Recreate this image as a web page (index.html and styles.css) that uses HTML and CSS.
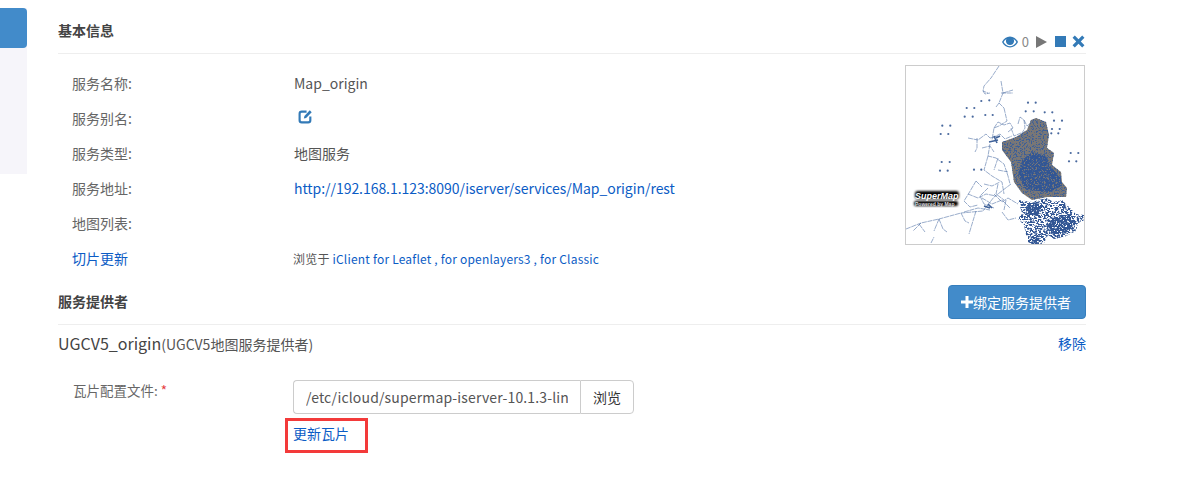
FILE: index.html
```html
<!DOCTYPE html>
<html lang="zh">
<head>
<meta charset="utf-8">
<title>基本信息</title>
<link rel="stylesheet" href="styles.css">
</head>
<body>
<div class="page">
  <aside class="side"><div class="side-active"></div></aside>
  <main class="main">
    <header class="head head-basic">
      <h2 class="title">基本信息</h2>
      <div class="tools">
        <svg class="ic-eye" viewBox="0 0 16 12"><path fill="#337ab7" fill-rule="evenodd" d="M8 .5C4.600.5 1.600 2.600 0 6c1.600 3.400 4.600 5.500 8 5.500s6.400-2.100 8-5.500C14.400 2.600 11.400.5 8 .5zM8 10.200C5.400 10.200 3 8.600 1.600 6 2.300 4.700 3.300 3.600 4.500 2.900 4.100 3.500 3.900 4.200 3.900 5c0 2.300 1.800 4.100 4.100 4.100S12.100 7.300 12.100 5c0-.8-.2-1.500-.6-2.100 1.200.7 2.200 1.800 2.900 3.100C13 8.600 10.600 10.200 8 10.200z"/><circle cx="7" cy="4" r="1.800" fill="#337ab7"/></svg>
        <span class="count">0</span>
        <svg class="ic-play" viewBox="0 0 11 12"><path fill="#777" d="M0 0l11 6-11 6z"/></svg>
        <span class="ic-stop"></span>
        <svg class="ic-x" viewBox="0 0 12 12"><path fill="#337ab7" d="M2.600.5L6 3.900 9.400.5l2.100 2.100L8.100 6l3.400 3.400-2.100 2.100L6 8.100l-3.400 3.400-2.100-2.100L3.900 6 .5 2.600z"/></svg>
      </div>
    </header>

    <section class="basic">
      <div class="rows">
        <div class="row"><span class="label">服务名称:</span><span class="value">Map_origin</span></div>
        <div class="row"><span class="label">服务别名:</span>
          <span class="value"><svg class="ic-edit" viewBox="0 0 14 14"><path fill="none" stroke="#337ab7" stroke-width="2" d="M8 2.500H3.500q-2 0-2 2v6q0 2 2 2h6q2 0 2-2V7"/><path fill="#337ab7" d="M6 6.500L11 1.200l1.800 1.800-5.200 5.300-2.200.5z"/></svg></span></div>
        <div class="row"><span class="label">服务类型:</span><span class="value">地图服务</span></div>
        <div class="row"><span class="label">服务地址:</span><a class="value link url" href="#">http://192.168.1.123:8090/iserver/services/Map_origin/rest</a></div>
        <div class="row"><span class="label">地图列表:</span><span class="value"></span></div>
        <div class="row"><a class="label link" href="#">切片更新</a>
          <span class="value small">浏览于 <a class="link" href="#">iClient for Leaflet , for openlayers3 , for Classic</a></span></div>
      </div>
      <div class="thumb">
        <svg viewBox="0 0 178 178" width="178" height="178">
          <defs>
            <filter id="sparse" x="0" y="0" width="100%" height="100%" color-interpolation-filters="sRGB">
              <feTurbulence type="fractalNoise" baseFrequency="0.7" numOctaves="2" seed="7"/>
              <feColorMatrix type="matrix" values="0 0 0 0 0.23  0 0 0 0 0.37  0 0 0 0 0.60  0 0 0 9 -4.700"/>
            </filter>
            <filter id="dense" x="0" y="0" width="100%" height="100%" color-interpolation-filters="sRGB">
              <feTurbulence type="fractalNoise" baseFrequency="0.6" numOctaves="2" seed="3"/>
              <feColorMatrix type="matrix" values="0 0 0 0 0.20  0 0 0 0 0.34  0 0 0 0 0.58  0 0 0 9 -3.300"/>
            </filter>
            <filter id="thin" x="0" y="0" width="100%" height="100%" color-interpolation-filters="sRGB">
              <feTurbulence type="fractalNoise" baseFrequency="0.45 0.75" numOctaves="3" seed="11"/>
              <feColorMatrix type="matrix" values="0 0 0 0 0.20  0 0 0 0 0.34  0 0 0 0 0.58  0 0 0 10 -4.500"/>
            </filter>
            <filter id="soft"><feGaussianBlur stdDeviation="0.9"/></filter>
            <filter id="tiny" x="-5%" y="-5%" width="110%" height="110%"><feGaussianBlur stdDeviation="0.3"/></filter>
            <clipPath id="land"><path d="M130 52l10 4 3 13-2 13 7 5-2 12 9 7 1 10 5 6-1 9h-19l-15 3-10-7-8-11-3-20-9-12v-8l14-5 11-7 4-10z"/></clipPath>
            <clipPath id="core"><path d="M116 94l10-8 14 4 4 10 10 10 2 10-12 6-24-2-8-14z"/></clipPath>
            <clipPath id="south"><path d="M112 134l14 2 14-4 8 4 8-2 8 8 6 6 8 1 1 5-7 3-2 8-12 6-10 2-6-4-4 8-6 2-4-6-8-4-2-10-6-6 4-6z"/></clipPath>
            <clipPath id="dark"><path d="M146 152l18-4 6 8-8 10-14 4-8-8zM122 136l14 2-4 12-12-2zM122 170l12 2-4 8-8-4z"/></clipPath>
          </defs>
          <g filter="url(#tiny)">
            <path fill="#7a7775" d="M130 52l10 4 3 13-2 13 7 5-2 12 9 7 1 10 5 6-1 9h-19l-15 3-10-7-8-11-3-20-9-12v-8l14-5 11-7 4-10z"/>
            <rect x="90" y="48" width="75" height="90" filter="url(#sparse)" clip-path="url(#land)"/>
            <rect x="100" y="85" width="62" height="50" filter="url(#dense)" clip-path="url(#core)"/>
            <rect x="100" y="128" width="78" height="50" filter="url(#thin)" clip-path="url(#south)"/>
            <rect x="100" y="128" width="78" height="50" filter="url(#dense)" clip-path="url(#dark)"/>
            <g fill="none" stroke="#45699f" stroke-width=".55" stroke-dasharray="5 .7">
              <path d="M93 0L85 12l-7 8-1 5 5 2M77 25l2 3 5-1M95 15l2 12-4 10 5 5M97 27l10-3M98 42l3 13-8 5-5 2-2 12M93 37l-3 4M95 27l12 0"/>
              <path d="M88 62l4-6 6 3 6-2 3 5-5 4M105 62l3 8 7-3 4 5M112 58l2-7 4 3 1 8-3 5M118 54l3 6 5-4M86 72l8-4 5 5 7-3"/>
              <path d="M62 72l10 2 8-6 4 4 8-2M71 72v10l-2 4M76 82l8-2 4 6M84 78l-2 12 8 2 8 6 4 12 2 8M82 90l-4 14 8 6 10 6 2 12M92 92l-4 12M92 104l10 2M78 118l8 2 8-4M70 115l6 6M92 118l-2 10 8 6"/>
              <path d="M0 163l15-6 18-4 22-6 22-2 11-14 17-13M15 157l-8 8M13 158l6 8M33 153l-5 12M33 153l4 10 4 3M55 147l4 8 4 2M70 145l-7 23M70 115l-7 12-5 8 6 6 8-2M62 128l10 4 8-4 10 2M76 132l10 6 10-4 8 8M58 146l14-4 12 2"/>
              <path d="M25 177l3-6M82 122l-8 8 4 8 10 4M88 128l8 8 6-4 10 6M96 146l6 8 8-2M100 134l-2 10"/>
            </g>
            <path fill="none" stroke="#3f6299" stroke-width="1.600" d="M83 76l9-2M88 70l3 7M90 72l4-2M78 140l6 2M82 138l4 4"/>
            <g fill="#4a6a9e">
              <circle cx="60.700" cy="42" r="1.100"/><circle cx="68.300" cy="42" r="1.100"/><circle cx="58.700" cy="50.700" r="1.100"/><circle cx="66.700" cy="50.700" r="1.100"/>
              <circle cx="75.300" cy="35" r="1.100"/><circle cx="83.300" cy="34.300" r="1.100"/><circle cx="79.300" cy="49" r="1.100"/><circle cx="86.700" cy="49" r="1.100"/>
              <circle cx="36.300" cy="59.700" r="1.100"/><circle cx="44.300" cy="59.700" r="1.100"/><circle cx="34.700" cy="68" r="1.100"/><circle cx="42.300" cy="68" r="1.100"/>
              <circle cx="35.700" cy="96" r="1.100"/><circle cx="43.700" cy="96" r="1.100"/><circle cx="34" cy="104.700" r="1.100"/><circle cx="41.700" cy="104.700" r="1.100"/>
              <circle cx="68" cy="103.700" r="1.100"/><circle cx="75.300" cy="103.700" r="1.100"/>
              <circle cx="122" cy="36.700" r="1.100"/><circle cx="129.700" cy="36.700" r="1.100"/><circle cx="119.700" cy="45.300" r="1.100"/><circle cx="127.700" cy="45.300" r="1.100"/><circle cx="138.700" cy="46.300" r="1.100"/><circle cx="146.300" cy="46.300" r="1.100"/>
              <circle cx="148" cy="54.700" r="1.100"/><circle cx="156" cy="54.700" r="1.100"/><circle cx="146" cy="63" r="1.100"/><circle cx="153.700" cy="63" r="1.100"/><circle cx="145.300" cy="67.300" r="1.100"/><circle cx="152.300" cy="67.300" r="1.100"/>
              <circle cx="164.700" cy="87" r="1.100"/><circle cx="172.300" cy="87" r="1.100"/><circle cx="163" cy="95.300" r="1.100"/><circle cx="170.300" cy="95.300" r="1.100"/>
            </g>
          </g>
          <g filter="url(#soft)" fill="#000"><rect x="9" y="125" width="44" height="8" rx="3"/><rect x="8" y="135" width="44" height="5" rx="2"/></g>
          <text x="9" y="133" class="logo-a">SuperMap</text>
          <text x="9" y="139.500" class="logo-b">Powered by Map</text>
        </svg>
      </div>
    </section>

    <header class="head head-provider">
      <h2 class="title">服务提供者</h2>
      <button class="bind" type="button"><svg class="ic-plus" viewBox="0 0 12 12"><path fill="#fff" d="M4.500 0h3v4.500H12v3H7.500V12h-3V7.500H0v-3h4.500z"/></svg>绑定服务提供者</button>
    </header>

    <div class="provider">
      <div class="provider-name"><span class="pname">UGCV5_origin</span><span class="ptype">(UGCV5地图服务提供者)</span></div>
      <a class="link" href="#">移除</a>
    </div>

    <div class="form">
      <label class="form-label">瓦片配置文件: <span class="req">*</span></label>
      <div class="form-body">
        <div class="input-group">
          <input class="input" type="text" value="/etc/icloud/supermap-iserver-10.1.3-linux/webapps/iserver">
          <button class="browse" type="button">浏览</button>
        </div>
        <a class="update link" href="#">更新瓦片</a>
      </div>
    </div>
  </main>
</div>
</body>
</html>
```

FILE: styles.css
```css
* { box-sizing: border-box; }
html, body { margin: 0; padding: 0; background: #fff; }
body {
  font-family: "Noto Sans CJK SC", "Open Sans", sans-serif;
  font-size: 14px;
  color: #555;
  width: 1185px;
  height: 491px;
  overflow: hidden;
}
a { text-decoration: none; }
.link { color: #0b5cc5; }

.page { display: flex; align-items: flex-start; }
.side { width: 27px; height: 174px; background: #f6f5fa; margin-right: 31px; padding-top: 8px; background-clip: content-box; }
.side-active { height: 40px; background: #428bca; border-radius: 0 4px 4px 0; }

.main { width: 1028px; }

.head { display: flex; justify-content: space-between; border-bottom: 1px solid #eee; }
.head-basic { height: 54px; align-items: flex-start; }
.head-provider { height: 40px; margin-top: 10px; align-items: flex-start; }
.title { margin: 0; font-size: 14px; font-weight: 700; line-height: 20px; color: #444; }
.head-basic .title { margin-top: 20px; }
.head-provider .title { margin-top: 6px; }

.tools { display: flex; align-items: center; margin-top: 35px; height: 13px; }
.ic-eye { width: 16px; height: 12px; }
.count { font-size: 13px; color: #888; margin-left: 4px; line-height: 13px; }
.ic-play { width: 11px; height: 12px; margin-left: 7px; }
.ic-stop { width: 11px; height: 11px; background: #337ab7; margin-left: 8px; }
.ic-x { width: 13px; height: 13px; margin-left: 6px; margin-right: 1px; }

.basic { display: flex; justify-content: space-between; align-items: flex-start; }
.rows { padding-top: 11px; }
.row { display: flex; align-items: center; height: 35px; }
.label { width: 236px; padding-left: 14px; font-size: 14px; color: #666; }
.label.link { color: #0b5cc5; }
.value { color: #555; }
.value.link { color: #0b5cc5; }
.url { letter-spacing: -.05px; }
.small { font-size: 12px; letter-spacing: .2px; margin-left: -1px; padding-top: 1px; }
.ic-edit { display: block; width: 15px; height: 15px; margin: -2px 0 0 4px; }

.thumb { width: 180px; height: 180px; border: 1px solid #ccc; margin: 11px 1px 0 0; background: #fff; }
.thumb svg { display: block; }
.logo-a { font: italic 700 9px "Liberation Sans", sans-serif; fill: #fff; }
.logo-b { font: 700 5px "Liberation Sans", sans-serif; fill: #ddd; }

.bind {
  display: flex; align-items: center;
  width: 138px; height: 34px; padding: 0 12px;
  background: #428bca; border: 1px solid #357ebd; border-radius: 4px;
  color: #fff; font: 14px "Noto Sans CJK SC", sans-serif;
}
.ic-plus { width: 12px; height: 12px; flex: none; }

.provider { display: flex; justify-content: space-between; align-items: center; height: 35px; }
.provider-name { display: flex; align-items: baseline; }
.pname { font-size: 16px; color: #444; }
.ptype { font-size: 14px; color: #555; }

.form { display: flex; margin-top: 20px; }
.form-label { width: 235px; font-size: 13.500px; line-height: 20px; color: #666; }
.req { color: #e4393c; }
.input-group { display: flex; width: 341px; height: 34px; }
.input {
  width: 287px; height: 34px; padding: 0 12px;
  border: 1px solid #ccc; border-right: 0; border-radius: 4px 0 0 4px;
  color: #555; font: 14px "Noto Sans CJK SC", sans-serif; letter-spacing: .15px; background: #fff; outline: 0;
}
.browse {
  width: 54px; height: 34px; padding: 0;
  border: 1px solid #ccc; border-radius: 0 4px 4px 0;
  background: #fff; color: #333; font: 14px "Noto Sans CJK SC", sans-serif;
}
.update {
  display: block; width: 83px; height: 35px; margin: 4px 0 0 -8px;
  padding-left: 5px; border: 3px solid #f33a3a;
  font-size: 14px; line-height: 25px;
}
.form-label { padding-left: 15px; }
```
